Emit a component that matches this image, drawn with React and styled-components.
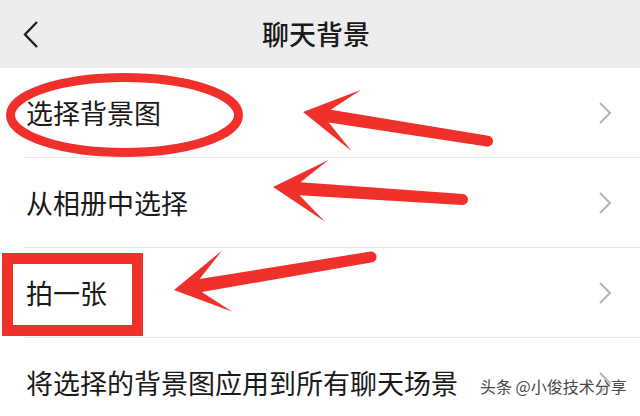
import React from 'react';
import styled, { createGlobalStyle } from 'styled-components';

const GlobalStyle = createGlobalStyle`
  html, body {
    margin: 0;
    padding: 0;
    background: #ffffff;
  }
  body {
    font-family: "Noto Sans CJK SC", "Noto Sans", sans-serif;
    overflow: hidden;
  }
`;

const RED = '#f0302a';

const items = [
  '选择背景图',
  '从相册中选择',
  '拍一张',
  '将选择的背景图应用到所有聊天场景',
];

// build an arrow outline from tip to tail end
function arrowPath(tip, end) {
  const dx = end[0] - tip[0];
  const dy = end[1] - tip[1];
  const len = Math.hypot(dx, dy);
  const u = [dx / len, dy / len];
  const n = [-u[1], u[0]];
  const pt = (a, l) => [tip[0] + u[0] * a + n[0] * l, tip[1] + u[1] * a + n[1] * l];
  const f = (p) => `${p[0].toFixed(1)} ${p[1].toFixed(1)}`;
  const r = 5.5;
  const wingA = pt(54, -31);
  const notchA = pt(27, -6.5);
  const tailA = pt(len - r, -r);
  const tailB = pt(len - r, r);
  const notchB = pt(27, 6.5);
  const wingB = pt(54, 31);
  return `M${f(tip)} L${f(wingA)} L${f(notchA)} L${f(tailA)} A${r} ${r} 0 0 1 ${f(tailB)} L${f(notchB)} L${f(wingB)} Z`;
}

const arrows = [
  { tip: [303, 112], end: [493, 142] },
  { tip: [273, 187], end: [468, 200] },
  { tip: [174, 290], end: [377, 256] },
];

function App() {
  return (
    <Page>
      <GlobalStyle />
      <Header>
        <BackButton>
          <svg width="20" height="30" viewBox="0 0 20 30">
            <path d="M15 3 L3 15.5 L15 28" fill="none" stroke="#1c1c1c" strokeWidth="2.3" strokeLinejoin="miter" />
          </svg>
        </BackButton>
        <Title>聊天背景</Title>
        <span />
      </Header>
      <List>
        {items.map((label) => (
          <Item key={label}>
            <ItemBody>
              <Label>{label}</Label>
              <Chevron width="14" height="24" viewBox="0 0 14 24">
                <path d="M2 2 L12 12 L2 22" fill="none" stroke="#b4b4b4" strokeWidth="2" />
              </Chevron>
            </ItemBody>
          </Item>
        ))}
      </List>
      <Marks width="640" height="416" viewBox="0 0 640 416">
        <ellipse cx="124.5" cy="115" rx="114" ry="37.5" fill="none" stroke={RED} strokeWidth="9" />
        <rect x="7.5" y="258.5" width="130" height="72" fill="none" stroke={RED} strokeWidth="11" />
        {arrows.map((a) => (
          <path key={a.tip.join(',')} d={arrowPath(a.tip, a.end)} fill={RED} />
        ))}
      </Marks>
      <Watermark>头条 @小俊技术分享</Watermark>
    </Page>
  );
}

const Page = styled.div`
  position: relative;
  width: 640px;
  height: 416px;
  overflow: hidden;
  background: #ffffff;
`;

const Header = styled.div`
  height: 68px;
  background: #ededed;
  display: grid;
  grid-template-columns: 80px 1fr 80px;
  align-items: center;
`;

const BackButton = styled.div`
  display: flex;
  align-items: center;
  padding-left: 22px;
  height: 100%;
  svg {
    display: block;
    margin-top: -1px;
  }
`;

const Title = styled.div`
  text-align: center;
  font-size: 27px;
  font-weight: 500;
  color: #1a1a1a;
  margin-top: -2px;
  margin-right: 8px;
`;

const List = styled.div`
  display: flex;
  flex-direction: column;
`;

const Item = styled.div`
  padding-left: 23px;
`;

const ItemBody = styled.div`
  height: 89px;
  display: flex;
  align-items: center;
  justify-content: space-between;
  padding-right: 28px;
  border-bottom: 1px solid #e8e8e8;
`;

const Label = styled.span`
  font-size: 27px;
  color: #1a1a1a;
  padding-left: 3px;
  letter-spacing: 0;
`;

const Chevron = styled.svg`
  display: block;
`;

const Marks = styled.svg`
  position: absolute;
  left: 0;
  top: 0;
  pointer-events: none;
`;

const Watermark = styled.div`
  position: absolute;
  left: 480px;
  top: 374px;
  font-size: 16px;
  color: #4a4a4a;
  white-space: nowrap;
  text-shadow: 0 0 2px #ffffff, 0 0 2px #ffffff;
`;

export default App;
